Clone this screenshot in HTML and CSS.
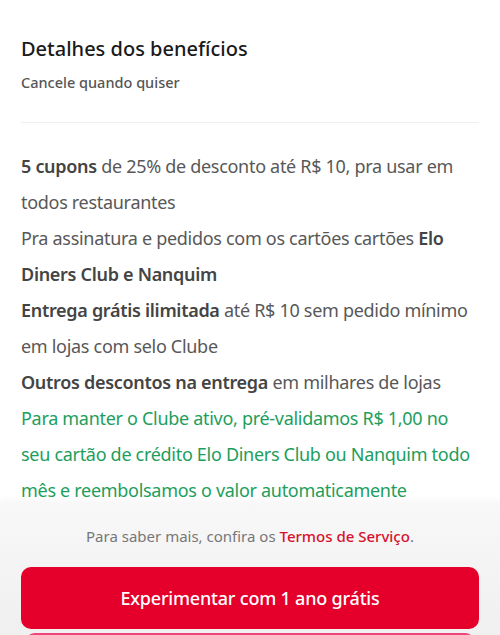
FILE: index.html
```html
<!doctype html>
<html lang="pt-br">
<head>
  <meta charset="UTF-8">
  <title>Detalhes dos benefícios</title>
  <link rel="stylesheet" href="styles.css">
</head>
<body>
  <div class="sheet">
    <div class="header">
      <h1 class="title">Detalhes dos benefícios</h1>
      <p class="subtitle">Cancele quando quiser</p>
    </div>
    <ul class="benefits">
      <li><b>5 cupons</b> de 25% de desconto até R$ 10, pra usar em todos restaurantes</li>
      <li>Pra assinatura e pedidos com os cartões cartões <b>Elo Diners Club e Nanquim</b></li>
      <li><b>Entrega grátis ilimitada</b> até R$ 10 sem pedido mínimo em lojas com selo Clube</li>
      <li><b>Outros descontos na entrega</b> em milhares de lojas</li>
      <li class="note">Para manter o Clube ativo, pré-validamos R$ 1,00 no seu cartão de crédito Elo Diners Club ou Nanquim todo mês e reembolsamos o valor automaticamente</li>
    </ul>
  </div>
  <div class="footer">
    <p class="terms">Para saber mais, confira os <a href="#">Termos de Serviço</a>.</p>
    <button type="button" class="btn-primary">Experimentar com 1 ano grátis</button>
    <div class="btn-secondary"></div>
  </div>
</body>
</html>
```

FILE: styles.css
```css
body {
  margin: 0;
  font-family: "Noto Sans", "Open Sans", sans-serif;
  color: #585858;
  background: #fff;
  height: 635px;
  overflow: hidden;
}

.sheet {
  padding: 0 21px;
}

.header {
  padding-top: 35px;
  padding-bottom: 30px;
  border-bottom: 1px solid #eee;
}

.title {
  margin: 0;
  font-size: 20px;
  font-weight: 500;
  line-height: 28px;
  color: #1a1a1a;
}

.subtitle {
  margin: 9px 0 0;
  font-size: 14.5px;
  font-weight: 500;
  line-height: 20px;
  color: #555;
}

.benefits {
  list-style: none;
  margin: 0;
  padding: 25px 0 0;
  font-size: 18px;
  line-height: 36px;
  letter-spacing: -0.3px;
}

.benefits b {
  font-weight: 600;
  color: #444;
}

.note {
  color: #1d9e5c;
}

/* o rodapé sobe um pouco por cima da última linha */
.footer {
  margin-top: -6px;
  padding: 22px 21px 0;
  background: linear-gradient(#f8f8f8, #f0f0f0 70%, #f4f4f4);
  box-shadow: 0 -3px 6px rgb(0 0 0 / 3%);
  text-align: center;
}

.terms {
  margin: 0 0 19px;
  font-size: 15px;
  line-height: 24px;
  color: #777;
}

.terms a {
  color: #d6122d;
  font-weight: 500;
  text-decoration: none;
}

.btn-primary {
  display: block;
  width: 100%;
  height: 62px;
  border: 0;
  border-radius: 10px;
  background: #e4002b;
  color: #fff;
  font-family: inherit;
  font-size: 18px;
  font-weight: 500;
  letter-spacing: -0.2px;
}

.btn-secondary {
  margin: 4px 4px 0;
  height: 40px;
  border: 2px solid #f0457a;
  border-radius: 10px;
}
```
